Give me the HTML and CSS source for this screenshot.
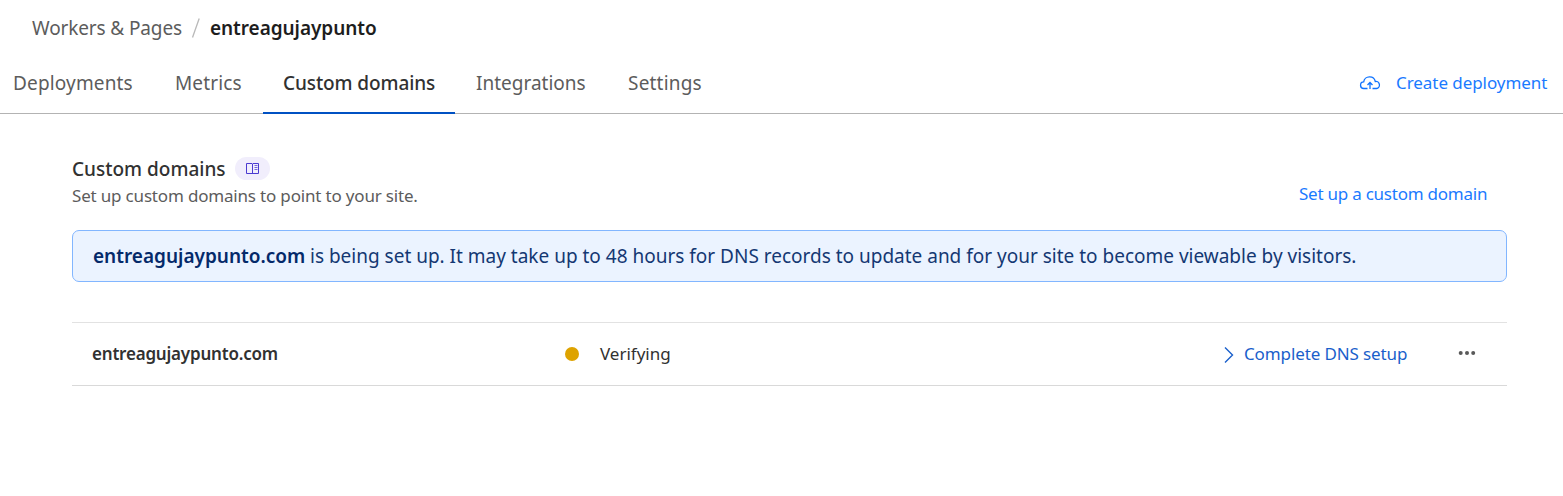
FILE: index.html
```html
<!DOCTYPE html>
<html lang="en">
<head>
<meta charset="utf-8">
<title>entreagujaypunto - Custom domains</title>
<link rel="stylesheet" href="styles.css">
</head>
<body>
<nav class="breadcrumb">
  <a class="crumb">Workers &amp; Pages</a>
  <svg class="slash" width="10" height="22" viewBox="0 0 10 22"><path d="M8.2 1.5 1.5 20.5" fill="none" stroke="#b9b9b9" stroke-width="1.3"/></svg>
  <span class="crumb-current">entreagujaypunto</span>
</nav>
<div class="tabs">
  <a class="tab deployments">Deployments</a>
  <a class="tab metrics">Metrics</a>
  <a class="tab active">Custom domains</a>
  <a class="tab integrations">Integrations</a>
  <a class="tab settings">Settings</a>
  <a class="create">
    <svg width="22" height="16" viewBox="0 0 22 16" fill="none" stroke="#0f73ff" stroke-width="1.3"><path d="M8.500 13.500H5a3.300 3.300 0 0 1-.3-6.600A5.800 5.800 0 0 1 10.500 1.900 5.800 5.800 0 0 1 16.300 6.500a3.500 3.500 0 0 1 1.200 7H13.500M11 14V7.700M8.500 10 11 7.500l2.500 2.500"/></svg>
    <span class="create-label">Create deployment</span>
  </a>
</div>
<main class="content">
  <header class="section-head">
    <div>
      <div class="title-row">
        <h1 class="title">Custom domains</h1>
        <a class="docs"><svg width="14" height="13" viewBox="0 0 14 13" fill="none" stroke="#4b3bd1" stroke-width="1"><path d="M.5 1.500H6L6.500 2 7 1.500h5.500v10H7l-.5.500-.5-.5H.5zM6.500 2v10"/><path d="M8.500 3.500h3M8.500 5.500h3M8.500 7.500h3" stroke-opacity=".75"/></svg></a>
      </div>
      <p class="subtitle">Set up custom domains to point to your site.</p>
    </div>
    <a class="setup">Set up a custom domain</a>
  </header>
  <div class="notice"><strong class="notice-domain">entreagujaypunto.com</strong><span class="notice-text">is being set up. It may take up to 48 hours for DNS records to update and for your site to become viewable by visitors.</span></div>
  <div class="row">
    <div class="domain"><span class="domain-name">entreagujaypunto.com</span></div>
    <div class="status"><i class="dot"></i><span class="status-label">Verifying</span></div>
    <a class="dns"><svg width="10" height="18" viewBox="0 0 10 18"><path d="M1 1.500 8.500 9 1 16.500" fill="none" stroke="#1a5fcb" stroke-width="1.400"/></svg><span class="dns-label">Complete DNS setup</span></a>
    <svg class="more" width="18" height="6" viewBox="0 0 18 6" fill="#595959"><circle cx="2.700" cy="3" r="2"/><circle cx="9" cy="3" r="2"/><circle cx="15.200" cy="3" r="2"/></svg>
  </div>
</main>
</body>
</html>
```
FILE: styles.css
```css
* { box-sizing: border-box; }
body { margin: 0; background: #fff; color: #313131; font-family: "Noto Sans", sans-serif; font-size: 19px; }
h1, p { margin: 0; }
.breadcrumb { display: flex; align-items: center; height: 56px; padding-left: 32px; white-space: nowrap; }
.crumb { width: 159px; color: #5c5c5c; letter-spacing: -0.13px; }
.slash { margin-right: 9px; }
.crumb-current { color: #1d1d1d; font-weight: 600; letter-spacing: -0.06px; }
.tabs { display: flex; height: 58px; border-bottom: 1px solid #b3b3b3; padding-left: 13px; line-height: 54px; white-space: nowrap; }
.tab { height: 58px; color: #5c5c5c; }
.deployments { width: 162px; letter-spacing: 0.15px; }
.metrics { width: 88px; letter-spacing: 0.12px; }
.tab.active { width: 192px; padding-left: 20px; border-bottom: 2px solid #0051c3; color: #313131; font-weight: 500; letter-spacing: -0.1px; }
.integrations { width: 173px; padding-left: 21px; }
.settings { letter-spacing: 0.2px; }
.create { display: flex; align-items: center; width: 204px; height: 54px; margin-left: auto; color: #1a7aff; font-size: 17px; letter-spacing: -0.06px; }
.create svg { margin-right: 15px; }
.content { padding: 43px 56px 0 72px; }
.section-head { display: flex; justify-content: space-between; height: 73px; white-space: nowrap; }
.title-row { display: flex; align-items: center; height: 24px; }
.title { width: 163px; font-size: 19px; font-weight: 500; line-height: 24px; }
.docs { display: flex; align-items: center; justify-content: center; width: 35px; height: 23px; margin-bottom: 2px; border-radius: 12px; background: #f1eefc; }
.subtitle { margin-top: 3px; color: #5c5c5c; font-size: 17px; line-height: 24px; letter-spacing: -0.18px; }
.setup { width: 208px; margin-top: 25px; color: #1a7aff; font-size: 17px; line-height: 24px; letter-spacing: -0.24px; }
.notice { display: flex; align-items: center; height: 52px; padding-left: 20px; border: 1px solid #82b6ff; border-radius: 7px; background: #ebf3ff; color: #04296a; white-space: nowrap; }
.notice-domain { width: 217px; font-weight: 600; }
.notice-text { color: #143873; letter-spacing: -0.005px; }
.row { display: flex; align-items: center; height: 64px; margin-top: 40px; padding: 0 0 2px 20px; border-top: 1px solid #e2e2e2; border-bottom: 1px solid #d9d9d9; font-size: 17px; white-space: nowrap; }
.domain { width: 473px; font-weight: 600; letter-spacing: -0.2px; }
.status { display: flex; align-items: center; width: 659px; }
.dot { width: 14px; height: 14px; margin: 2px 21px 0 0; border-radius: 50%; background: #dea300; }
.dns { display: flex; align-items: center; width: 234px; color: #1a5fcb; letter-spacing: -0.12px; }
.dns svg { margin: 3px 10px 0 0; }
```
